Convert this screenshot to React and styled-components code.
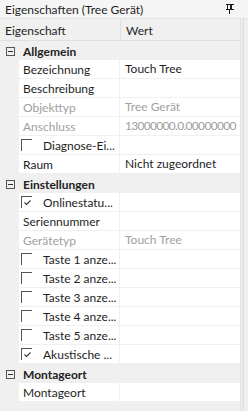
import React from "react";
import styled, { createGlobalStyle } from "styled-components";

const GlobalStyle = createGlobalStyle`
  html, body { margin: 0; padding: 0; background: #f0f0f0; }
  body { font-family: "Segoe UI", "Lato", "Noto Sans", sans-serif; font-size: 12px; }
`;

// property data
const groups = [
  {
    name: "Allgemein",
    rows: [
      { label: "Bezeichnung", value: "Touch Tree" },
      { label: "Beschreibung", value: "" },
      { label: "Objekttyp", value: "Tree Gerät", disabled: true },
      { label: "Anschluss", value: "13000000.0.00000000", disabled: true, tight: true },
      { label: "Diagnose-Ei...", check: false },
      { label: "Raum", value: "Nicht zugeordnet" },
    ],
  },
  {
    name: "Einstellungen",
    rows: [
      { label: "Onlinestatu...", check: true },
      { label: "Seriennummer", value: "" },
      { label: "Gerätetyp", value: "Touch Tree", disabled: true },
      { label: "Taste 1 anze...", check: false },
      { label: "Taste 2 anze...", check: false },
      { label: "Taste 3 anze...", check: false },
      { label: "Taste 4 anze...", check: false },
      { label: "Taste 5 anze...", check: false },
      { label: "Akustische ...", check: true },
    ],
  },
  {
    name: "Montageort",
    rows: [{ label: "Montageort", value: "" }],
  },
];

const PinIcon = () => (
  <svg width="8" height="10" viewBox="0 0 8 10">
    <rect x="0" y="0" width="8" height="1" fill="#1e1e1e" />
    <rect x="1" y="1" width="1" height="5" fill="#1e1e1e" />
    <rect x="4" y="1" width="2" height="5" fill="#1e1e1e" />
    <rect x="0" y="5" width="8" height="1" fill="#1e1e1e" />
    <rect x="3" y="6" width="1" height="4" fill="#1e1e1e" />
  </svg>
);

const CheckMark = () => (
  <svg width="9" height="9" viewBox="0 0 9 9">
    <polyline points="1.5,4.5 3.5,6.5 7.5,2.5" fill="none" stroke="#333" strokeWidth="1.1" />
  </svg>
);

const App = () => {
  return (
    <Panel>
      <GlobalStyle />
      <TitleBar>
        <span>Eigenschaften (Tree Gerät)</span>
        <PinButton>
          <PinIcon />
        </PinButton>
      </TitleBar>

      <GridArea>
        <Grid>
          <HeaderRow>
            <HeaderCell>Eigenschaft</HeaderCell>
            <HeaderCell>Wert</HeaderCell>
          </HeaderRow>

          {groups.map((group) => (
            <React.Fragment key={group.name}>
              <CategoryRow>
                <Expander>
                  <span />
                </Expander>
                {group.name}
              </CategoryRow>
              {group.rows.map((row, i) => (
                <PropRow key={i}>
                  <Indent />
                  <NameCell disabled={row.disabled}>
                    {row.check !== undefined && (
                      <CheckBox>{row.check && <CheckMark />}</CheckBox>
                    )}
                    <NameText $check={row.check !== undefined}>{row.label}</NameText>
                  </NameCell>
                  <ValueCell disabled={row.disabled} $tight={row.tight}>
                    {row.value}
                  </ValueCell>
                </PropRow>
              ))}
            </React.Fragment>
          ))}
        </Grid>
        <ScrollStrip />
      </GridArea>
    </Panel>
  );
};

const Panel = styled.div`
  width: 248px;
  height: 411px;
  display: flex;
  flex-direction: column;
  background: #f0f0f0;
  color: #1e1e1e;
  overflow: hidden;
`;

const TitleBar = styled.div`
  height: 19px;
  display: flex;
  align-items: center;
  justify-content: space-between;
  padding: 1px 14px 0 5px;
  background: #f5f5f5;
  border-bottom: 1px solid #e3e3e3;
  box-sizing: border-box;
`;

const PinButton = styled.div`
  display: flex;
  align-items: center;
  padding-bottom: 2px;
`;

const GridArea = styled.div`
  flex: 1;
  display: flex;
`;

const Grid = styled.div`
  width: 240px;
  display: flex;
  flex-direction: column;
  border-right: 1px solid #e3e3e3;
`;

const ScrollStrip = styled.div`
  width: 2px;
  background: #ececec;
  border-right: 1px solid #dcdcdc;
`;

const HeaderRow = styled.div`
  height: 22px;
  display: grid;
  grid-template-columns: 121px 1fr;
  background: #f0f0f0;
  border-bottom: 1px solid #e0e0e0;
  box-sizing: border-box;
`;

const HeaderCell = styled.div`
  padding: 2px 0 0 5px;
  line-height: 19px;
  border-right: 1px solid #e0e0e0;
  &:last-child { border-right: none; }
`;

const CategoryRow = styled.div`
  height: 19px;
  display: flex;
  align-items: center;
  font-weight: bold;
  color: #222;
  background: #f0f0f0;
  padding-top: 1px;
  box-sizing: border-box;
`;

const Expander = styled.div`
  width: 7px;
  height: 7px;
  border: 1px solid #555;
  margin: 0 8px 0 6px;
  display: flex;
  align-items: center;
  justify-content: center;

  span {
    width: 5px;
    height: 1px;
    background: #333;
  }
`;

const PropRow = styled.div`
  height: 19px;
  display: grid;
  grid-template-columns: 19px 101px 1fr;
`;

const Indent = styled.div`
  background: #f0f0f0;
`;

const NameCell = styled.div`
  display: flex;
  align-items: center;
  background: #fff;
  border-right: 1px solid #f0f0f0;
  border-bottom: 1px solid #f0f0f0;
  color: ${({ disabled }) => (disabled ? "#a0a0a0" : "#1e1e1e")};
  overflow: hidden;
  white-space: nowrap;
`;

const NameText = styled.span`
  padding-left: ${({ $check }) => ($check ? "11px" : "4px")};
`;

const CheckBox = styled.div`
  width: 10px;
  height: 11px;
  margin-left: 2px;
  border-top: 1px solid #555;
  border-left: 1px solid #555;
  display: flex;
  align-items: center;
  justify-content: center;
`;

const ValueCell = styled.div`
  background: #fff;
  border-bottom: 1px solid #f0f0f0;
  padding-left: 5px;
  line-height: 18px;
  white-space: nowrap;
  overflow: hidden;
  letter-spacing: ${({ $tight }) => ($tight ? "-0.7px" : "normal")};
  color: ${({ disabled }) => (disabled ? "#a0a0a0" : "#1e1e1e")};
`;

export default App;
